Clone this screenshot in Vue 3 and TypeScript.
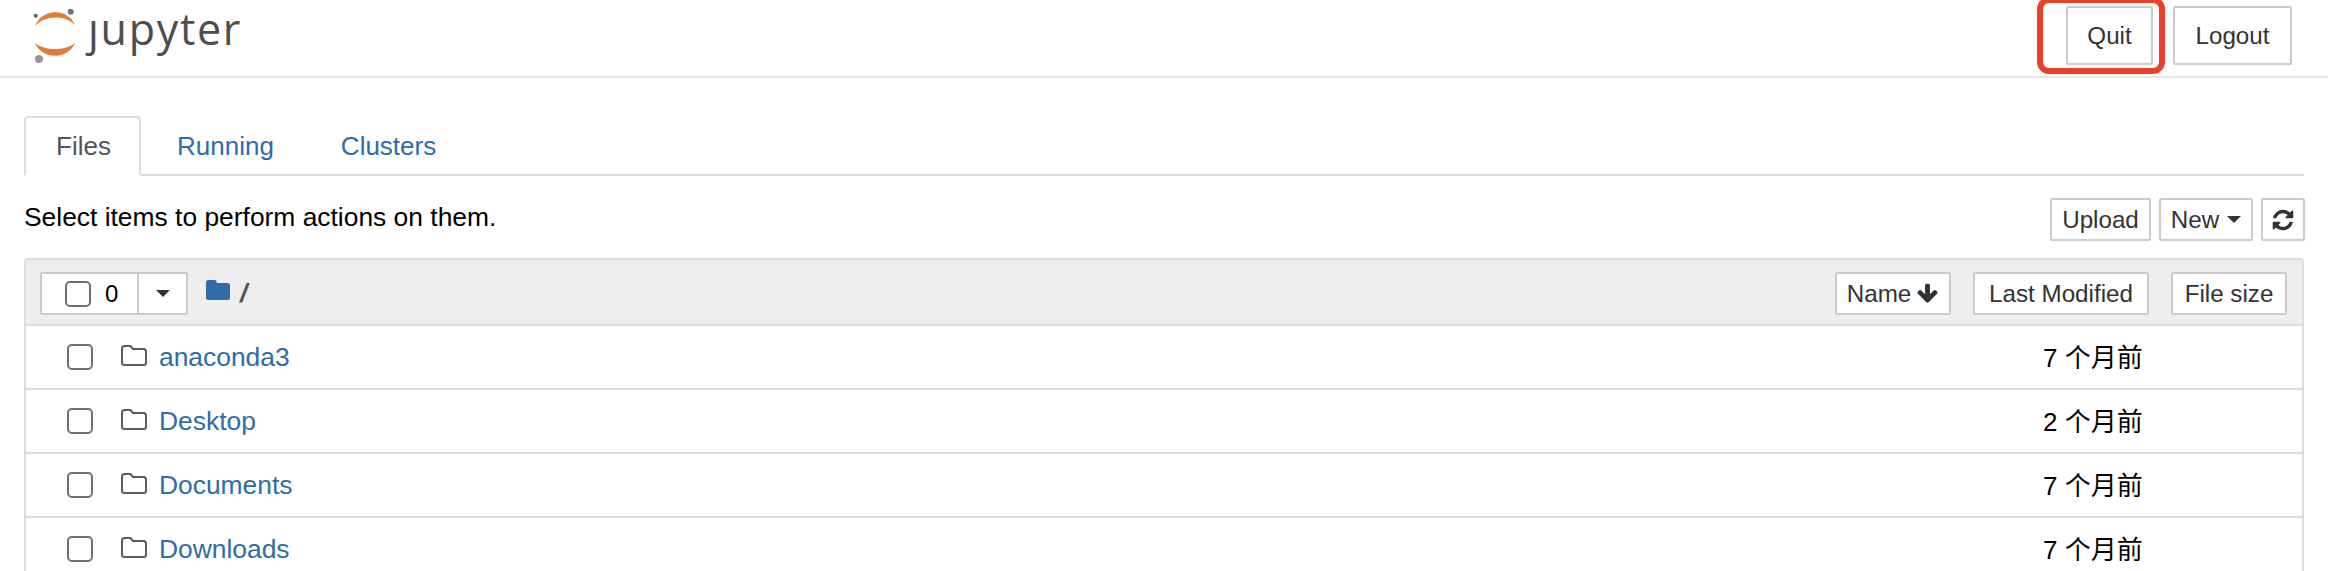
<script setup lang="ts">
interface Entry {
  name: string
  modified: string
}

const entries: Entry[] = [
  { name: 'anaconda3', modified: '7 个月前' },
  { name: 'Desktop', modified: '2 个月前' },
  { name: 'Documents', modified: '7 个月前' },
  { name: 'Downloads', modified: '7 个月前' }
]
</script>

<template>
  <div class="page">
    <header class="site-header">
      <a class="logo">
        <svg class="logo__mark" width="50" height="56" viewBox="30 8 50 56" aria-hidden="true">
          <path d="M35 26 C42 8 68 8 75 25 C65 15 45 15 35 26 Z" fill="#e67b36" />
          <path d="M35 43 C45 51 65 51 75 43 C68 60 42 60 35 43 Z" fill="#e67b36" />
          <circle cx="70.700" cy="11.700" r="3" fill="#767677" />
          <circle cx="35.700" cy="15.700" r="2" fill="#616262" />
          <circle cx="39" cy="59" r="4" fill="#989798" />
        </svg>
        <span class="logo__text">ȷupyter</span>
      </a>
      <div class="site-header__actions">
        <div class="highlighted">
          <button class="btn btn--nav btn--quit" type="button">Quit</button>
          <span class="highlight" aria-hidden="true"></span>
        </div>
        <button class="btn btn--nav btn--logout" type="button">Logout</button>
      </div>
    </header>

    <main class="content">
      <nav class="tabs">
        <a class="tab tab--active">Files</a>
        <a class="tab">Running</a>
        <a class="tab">Clusters</a>
      </nav>

      <div class="toolbar">
        <span class="toolbar__hint">Select items to perform actions on them.</span>
        <div class="toolbar__buttons">
          <button class="btn btn--upload" type="button">Upload</button>
          <button class="btn btn--new" type="button">New<span class="caret"></span></button>
          <button class="btn btn--refresh" type="button" aria-label="Refresh">
            <svg width="24" height="24" viewBox="0 0 1792 1792" aria-hidden="true">
              <path fill="#333" d="M1639 1056q0 5-1 7-64 268-268 434.5t-478 166.5q-146 0-282.5-55t-243.5-157l-129 129q-19 19-45 19t-45-19-19-45v-448q0-26 19-45t45-19h448q26 0 45 19t19 45-19 45l-137 137q71 66 161 102t187 36q134 0 250-65t186-179q11-17 53-117 8-23 30-23h192q13 0 22.5 9.5t9.5 22.5zm25-800v448q0 26-19 45t-45 19h-448q-26 0-45-19t-19-45 19-45l138-138q-148-137-349-137-134 0-250 65t-186 179q-11 17-53 117-8 23-30 23h-199q-13 0-22.5-9.5t-9.5-22.5v-7q65-268 270-434.5t480-166.5q146 0 284 55.5t245 156.5l130-129q19-19 45-19t45 19 19 45z" />
            </svg>
          </button>
        </div>
      </div>

      <section class="list">
        <div class="list__head">
          <div class="selector">
            <span class="selector__count">
              <span class="checkbox"></span>
              <span class="selector__num">0</span>
            </span>
            <span class="selector__drop"><span class="caret caret--only"></span></span>
          </div>
          <svg class="crumb-icon" width="24" height="20" viewBox="0 0 24 20" aria-hidden="true">
            <path fill="#2f6ca9" d="M2.500 0h6a2 2 0 0 1 1.700 1L11 3h10.500A2.500 2.500 0 0 1 24 5.500v12a2.500 2.500 0 0 1-2.500 2.500h-19A2.500 2.500 0 0 1 0 17.500v-15A2.500 2.500 0 0 1 2.500 0z" />
          </svg>
          <span class="crumb-sep">/</span>
          <div class="sorters">
            <button class="btn btn--name" type="button">
              Name
              <svg width="23" height="23" viewBox="0 0 1792 1792" aria-hidden="true">
                <path fill="#333" d="M1675 832q0 53-37 90l-651 652q-39 37-91 37-53 0-90-37l-651-652q-38-36-38-90 0-53 38-91l74-75q39-37 91-37 53 0 90 37l294 294v-704q0-52 38-90t90-38h128q52 0 90 38t38 90v704l294-294q37-37 90-37 52 0 91 37l75 75q37 39 37 91z" />
              </svg>
            </button>
            <button class="btn btn--modified" type="button">Last Modified</button>
            <button class="btn btn--size" type="button">File size</button>
          </div>
        </div>

        <div v-for="entry in entries" :key="entry.name" class="row">
          <span class="checkbox"></span>
          <svg class="row__icon" width="26" height="22" viewBox="0 0 26 22" aria-hidden="true">
            <path fill="none" stroke="#5c5c5c" stroke-width="2" d="M3.500 1h5.200a2 2 0 0 1 1.600.8L12 4h10.500A2.500 2.500 0 0 1 25 6.500v11a2.500 2.500 0 0 1-2.500 2.500h-19A2.500 2.500 0 0 1 1 17.500v-14A2.500 2.500 0 0 1 3.500 1z" />
          </svg>
          <a class="row__name">{{ entry.name }}</a>
          <span class="row__date">{{ entry.modified }}</span>
        </div>
      </section>
    </main>
  </div>
</template>

<style>
html,
body {
  margin: 0;
  background: #fff;
}
</style>

<style scoped>
.page {
  height: 571px;
  overflow: hidden;
  font-family: 'Liberation Sans', 'Noto Sans CJK SC', Arial, sans-serif;
  font-size: 26.4px;
  color: #000;
}

/* Top bar */
.site-header {
  display: flex;
  align-items: flex-start;
  justify-content: space-between;
  height: 76px;
  border-bottom: 2px solid #e7e7e7;
  padding-right: 36px;
}
.logo {
  display: flex;
  align-items: flex-start;
  margin: 8px 0 0 30px;
  color: #4e4e4e;
}
.logo__mark {
  flex: none;
}
.logo__text {
  margin: -9px 0 0 8px;
  font-family: 'Open Sans', sans-serif;
  font-size: 43px;
  letter-spacing: 1.7px;
  line-height: 60px;
}
.site-header__actions {
  display: flex;
  gap: 20px;
  margin-top: 6px;
}
.highlighted {
  position: relative;
}
.highlight {
  position: absolute;
  left: -29px;
  right: -12px;
  top: -9px;
  bottom: -9px;
  border: 6px solid #e8412a;
  border-radius: 12px;
  pointer-events: none;
}

/* Buttons */
.btn {
  display: inline-flex;
  align-items: center;
  justify-content: center;
  box-sizing: border-box;
  height: 43px;
  padding: 0;
  background: #fff;
  border: 2px solid #cbcbcb;
  border-radius: 2px;
  color: #333;
  font: inherit;
  font-size: 24.2px;
}
.btn--nav {
  height: 59px;
}
.btn--quit {
  width: 87px;
}
.btn--logout {
  width: 119px;
}
.btn--upload {
  width: 101px;
}
.btn--new {
  width: 94px;
}
.btn--refresh {
  width: 44px;
}
.btn--name {
  width: 116px;
  gap: 5px;
}
.btn--modified {
  width: 176px;
}
.btn--size {
  width: 116px;
}
.caret {
  display: inline-block;
  margin-left: 8px;
  border-top: 7px solid #333;
  border-left: 7px solid transparent;
  border-right: 7px solid transparent;
}
.caret--only {
  margin-left: 0;
}

/* Tabs */
.content {
  padding: 38px 24px 0;
}
.tabs {
  display: flex;
  height: 58px;
  border-bottom: 2px solid #ddd;
}
.tab {
  box-sizing: border-box;
  height: 60px;
  padding: 0 31px 0 36px;
  color: #2f6ca9;
  font-size: 26px;
  line-height: 60px;
}
.tab--active {
  width: 117px;
  padding: 0 30px;
  background: #fff;
  border: 2px solid #ddd;
  border-bottom-color: #fff;
  border-radius: 4px 4px 0 0;
  color: #555;
  line-height: 56px;
}

/* Toolbar */
.toolbar {
  display: flex;
  justify-content: space-between;
  align-items: flex-start;
  height: 61px;
  margin-top: 22px;
}
.toolbar__hint {
  line-height: 30px;
  margin-top: 4px;
}
.toolbar__buttons {
  display: flex;
  gap: 8px;
  margin-right: -1px;
}

/* File list */
.list {
  border: 2px solid #ddd;
  border-bottom: none;
  border-radius: 4px 4px 0 0;
  margin-top: -1px;
}
.list__head {
  display: flex;
  align-items: flex-start;
  box-sizing: border-box;
  height: 66px;
  padding: 12px 15px 0 14px;
  background: #eee;
  border-bottom: 2px solid #ddd;
}
.selector {
  display: flex;
  box-sizing: border-box;
  width: 148px;
  height: 43px;
  background: #fff;
  border: 2px solid #cbcbcb;
  border-radius: 2px;
}
.selector__count {
  display: flex;
  align-items: center;
  box-sizing: border-box;
  width: 97px;
  padding-left: 23px;
  border-right: 2px solid #cbcbcb;
}
.selector__num {
  margin-left: 14px;
  font-size: 24px;
}
.selector__drop {
  display: flex;
  flex: 1;
  align-items: center;
  justify-content: center;
}
.checkbox {
  display: block;
  flex: none;
  box-sizing: border-box;
  width: 26px;
  height: 26px;
  background: #fff;
  border: 2px solid #707070;
  border-radius: 5px;
}
.crumb-icon {
  margin: 8px 0 0 18px;
}
.crumb-sep {
  margin: 3px 0 0 10px;
  color: #555;
  font-style: italic;
  font-weight: 700;
  line-height: 36px;
}
.sorters {
  display: flex;
  gap: 22px;
  margin-left: auto;
}
.row {
  display: flex;
  align-items: center;
  box-sizing: border-box;
  height: 64px;
  padding-left: 41px;
  border-bottom: 2px solid #ddd;
}
.row__icon {
  margin: -3px 0 0 28px;
}
.row__name {
  margin: 1px 0 0 12px;
  color: #2f6ca9;
}
.row__date {
  margin: -3px 0 0 auto;
  width: 259px;
  font-size: 26px;
}
</style>
